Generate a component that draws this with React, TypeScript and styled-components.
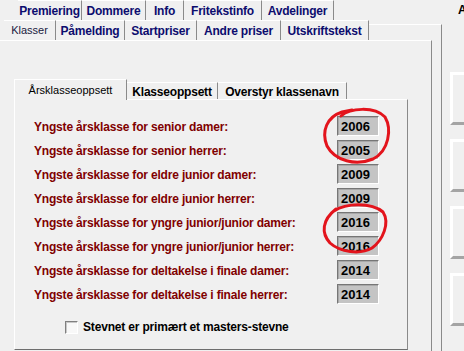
import React from "react";
import styled, { createGlobalStyle } from "styled-components";

const Global = createGlobalStyle`
  html, body { margin: 0; padding: 0; background: #f0f0f0; overflow: hidden; }
  #root { width: 464px; height: 351px; }
`;

const Screen = styled.div`
  position: relative;
  display: flex;
  width: 464px;
  height: 351px;
  overflow: hidden;
  background: #f0f0f0;
  font-family: "Liberation Sans", Arial, sans-serif;
`;

const Main = styled.div`
  width: 442px;
  display: flex;
  flex-direction: column;
  flex: none;
`;

const TabRow = styled.div<{ $left: number }>`
  display: flex;
  height: 20px;
  padding-left: ${(p) => p.$left}px;
  flex: none;
`;

const OuterTab = styled.div<{ $w: number; $active?: boolean }>`
  box-sizing: border-box;
  width: ${(p) => p.$w}px;
  height: 20px;
  padding-top: 3px;
  text-align: center;
  border-right: 1px solid #8a8a8a;
  border-top: 1px solid #ffffff;
  font-size: ${(p) => (p.$active ? "11px" : "12px")};
  font-weight: ${(p) => (p.$active ? 400 : 700)};
  letter-spacing: ${(p) => (p.$active ? "0" : "-0.2px")};
  color: ${(p) => (p.$active ? "#1a1a40" : "#0c0c6e")};
  white-space: nowrap;
`;

const RowFiller = styled.div`
  flex: 1;
  margin-top: 4px;
  border-top: 1px solid #ffffff;
  border-right: 1px solid #8a8a8a;
`;

const Frame = styled.div`
  flex: 1;
  display: flex;
  border-right: 1px solid #8a8a8a;
  padding-right: 9px;
`;

const Page = styled.div`
  flex: 1;
  display: flex;
  flex-direction: column;
  border-top: 1px solid #ffffff;
  border-right: 1px solid #8a8a8a;
  padding: 38px 0 0 14px;
`;

const InnerTabs = styled.div`
  display: flex;
  height: 20px;
  align-items: flex-end;
  position: relative;
  z-index: 1;
`;

const InnerTab = styled.div<{ $w: number; $active?: boolean }>`
  box-sizing: border-box;
  width: ${(p) => p.$w}px;
  height: ${(p) => (p.$active ? 21 : 17)}px;
  margin-bottom: ${(p) => (p.$active ? -1 : 0)}px;
  padding-top: ${(p) => (p.$active ? 4 : 2)}px;
  text-align: center;
  background: #f0f0f0;
  border-top: 1px solid #ffffff;
  border-left: ${(p) => (p.$active ? "1px solid #ffffff" : "none")};
  border-right: 1px solid #8a8a8a;
  font-size: ${(p) => (p.$active ? "11px" : "12px")};
  font-weight: ${(p) => (p.$active ? 400 : 700)};
  letter-spacing: ${(p) => (p.$active ? "0" : "-0.2px")};
  color: #000;
  white-space: nowrap;
`;

const Panel = styled.div`
  box-sizing: border-box;
  width: 394px;
  height: 251px;
  border-top: 1px solid #ffffff;
  border-left: 1px solid #ffffff;
  border-right: 1px solid #8a8a8a;
  border-bottom: 1px solid #6e6e6e;
  padding: 16px 0 0 19px;
`;

const FieldGrid = styled.div`
  display: grid;
  grid-template-columns: 303px 42px;
  grid-auto-rows: 20px;
  row-gap: 4px;
`;

const Label = styled.div`
  display: flex;
  align-items: center;
  padding-top: 1px;
  font-size: 12px;
  font-weight: 700;
  letter-spacing: -0.18px;
  color: #800000;
  white-space: nowrap;
`;

const YearBox = styled.div`
  box-sizing: border-box;
  height: 20px;
  border-style: solid;
  border-width: 1px;
  border-color: #767676 #ffffff #ffffff #767676;
  box-shadow: inset 1px 1px 0 #a8a8a8;
  background: #c4c4c4;
  padding: 2px 0 0 3px;
  font-size: 13px;
  font-weight: 700;
  color: #000;
`;

const CheckRow = styled.label`
  display: flex;
  align-items: center;
  gap: 5px;
  margin: 16px 0 0 31px;
  font-size: 12px;
  font-weight: 700;
  letter-spacing: -0.18px;
  color: #000;
  white-space: nowrap;
`;

const CheckBox = styled.span`
  box-sizing: border-box;
  width: 13px;
  height: 13px;
  border-style: solid;
  border-width: 1px;
  border-color: #808080 #ffffff #ffffff #808080;
  box-shadow: inset 1px 1px 0 #c8c8c8;
  background: #f8f8f8;
`;

const Side = styled.div`
  flex: none;
  width: 22px;
  display: flex;
  flex-direction: column;
  padding: 3px 0 0 8px;
  gap: 14px;
`;

const Caption = styled.div`
  height: 15px;
  margin: 0 0 40px 8px;
  font-size: 12px;
  font-weight: 700;
  color: #000;
  line-height: 15px;
`;

const SideButton = styled.div`
  box-sizing: border-box;
  width: 30px;
  height: 53px;
  background: #f0f0f0;
  border-top: 3px solid #ffffff;
  border-left: 3px solid #ffffff;
  border-bottom: 3px solid #a4a4a4;
`;

const Annotations = styled.svg`
  position: absolute;
  left: 0;
  top: 0;
  pointer-events: none;
`;

const row1 = [
  { t: "Premiering", w: 64 },
  { t: "Dommere", w: 64 },
  { t: "Info", w: 38 },
  { t: "Fritekstinfo", w: 78 },
  { t: "Avdelinger", w: 72 },
];

const row2 = [
  { t: "Klasser", w: 52, a: true },
  { t: "Påmelding", w: 69 },
  { t: "Startpriser", w: 72 },
  { t: "Andre priser", w: 84 },
  { t: "Utskriftstekst", w: 88 },
];

const fields = [
  ["Yngste årsklasse for senior damer:", "2006"],
  ["Yngste årsklasse for senior herrer:", "2005"],
  ["Yngste årsklasse for eldre junior damer:", "2009"],
  ["Yngste årsklasse for eldre junior herrer:", "2009"],
  ["Yngste årsklasse for yngre junior/junior damer:", "2016"],
  ["Yngste årsklasse for yngre junior/junior herrer:", "2016"],
  ["Yngste årsklasse for deltakelse i finale damer:", "2014"],
  ["Yngste årsklasse for deltakelse i finale herrer:", "2014"],
];

export default function App() {
  return (
    <Screen>
      <Global />
      <Main>
        <TabRow $left={18}>
          {row1.map((r) => (
            <OuterTab key={r.t} $w={r.w}>
              {r.t}
            </OuterTab>
          ))}
        </TabRow>
        <TabRow $left={4}>
          {row2.map((r) => (
            <OuterTab key={r.t} $w={r.w} $active={r.a}>
              {r.t}
            </OuterTab>
          ))}
          <RowFiller />
        </TabRow>
        <Frame>
          <Page>
            <InnerTabs>
              <InnerTab $w={113} $active>
                Årsklasseoppsett
              </InnerTab>
              <InnerTab $w={91}>Klasseoppsett</InnerTab>
              <InnerTab $w={129}>Overstyr klassenavn</InnerTab>
            </InnerTabs>
            <Panel>
              <FieldGrid>
                {fields.map(([l, y], i) => (
                  <React.Fragment key={i}>
                    <Label>{l}</Label>
                    <YearBox>{y}</YearBox>
                  </React.Fragment>
                ))}
              </FieldGrid>
              <CheckRow>
                <CheckBox />
                Stevnet er primært et masters-stevne
              </CheckRow>
            </Panel>
          </Page>
        </Frame>
      </Main>
      <Side>
        <Caption>A</Caption>
        <SideButton />
        <SideButton />
        <SideButton />
        <SideButton />
      </Side>
      <Annotations width="464" height="351" viewBox="0 0 464 351">
        <path
          d="M 341 116 C 350 108, 374 106, 385 117 C 392 129, 389 151, 373 159 C 356 166, 335 161, 327 146 C 321 131, 327 117, 342 112 L 352 110"
          fill="none"
          stroke="#e3141c"
          strokeWidth="3"
          strokeLinecap="round"
        />
        <path
          d="M 334 211 C 346 203, 371 202, 383 212 C 390 223, 383 240, 372 248 C 360 255, 340 252, 330 243 C 321 233, 322 220, 336 209"
          fill="none"
          stroke="#e3141c"
          strokeWidth="3"
          strokeLinecap="round"
        />
      </Annotations>
    </Screen>
  );
}
